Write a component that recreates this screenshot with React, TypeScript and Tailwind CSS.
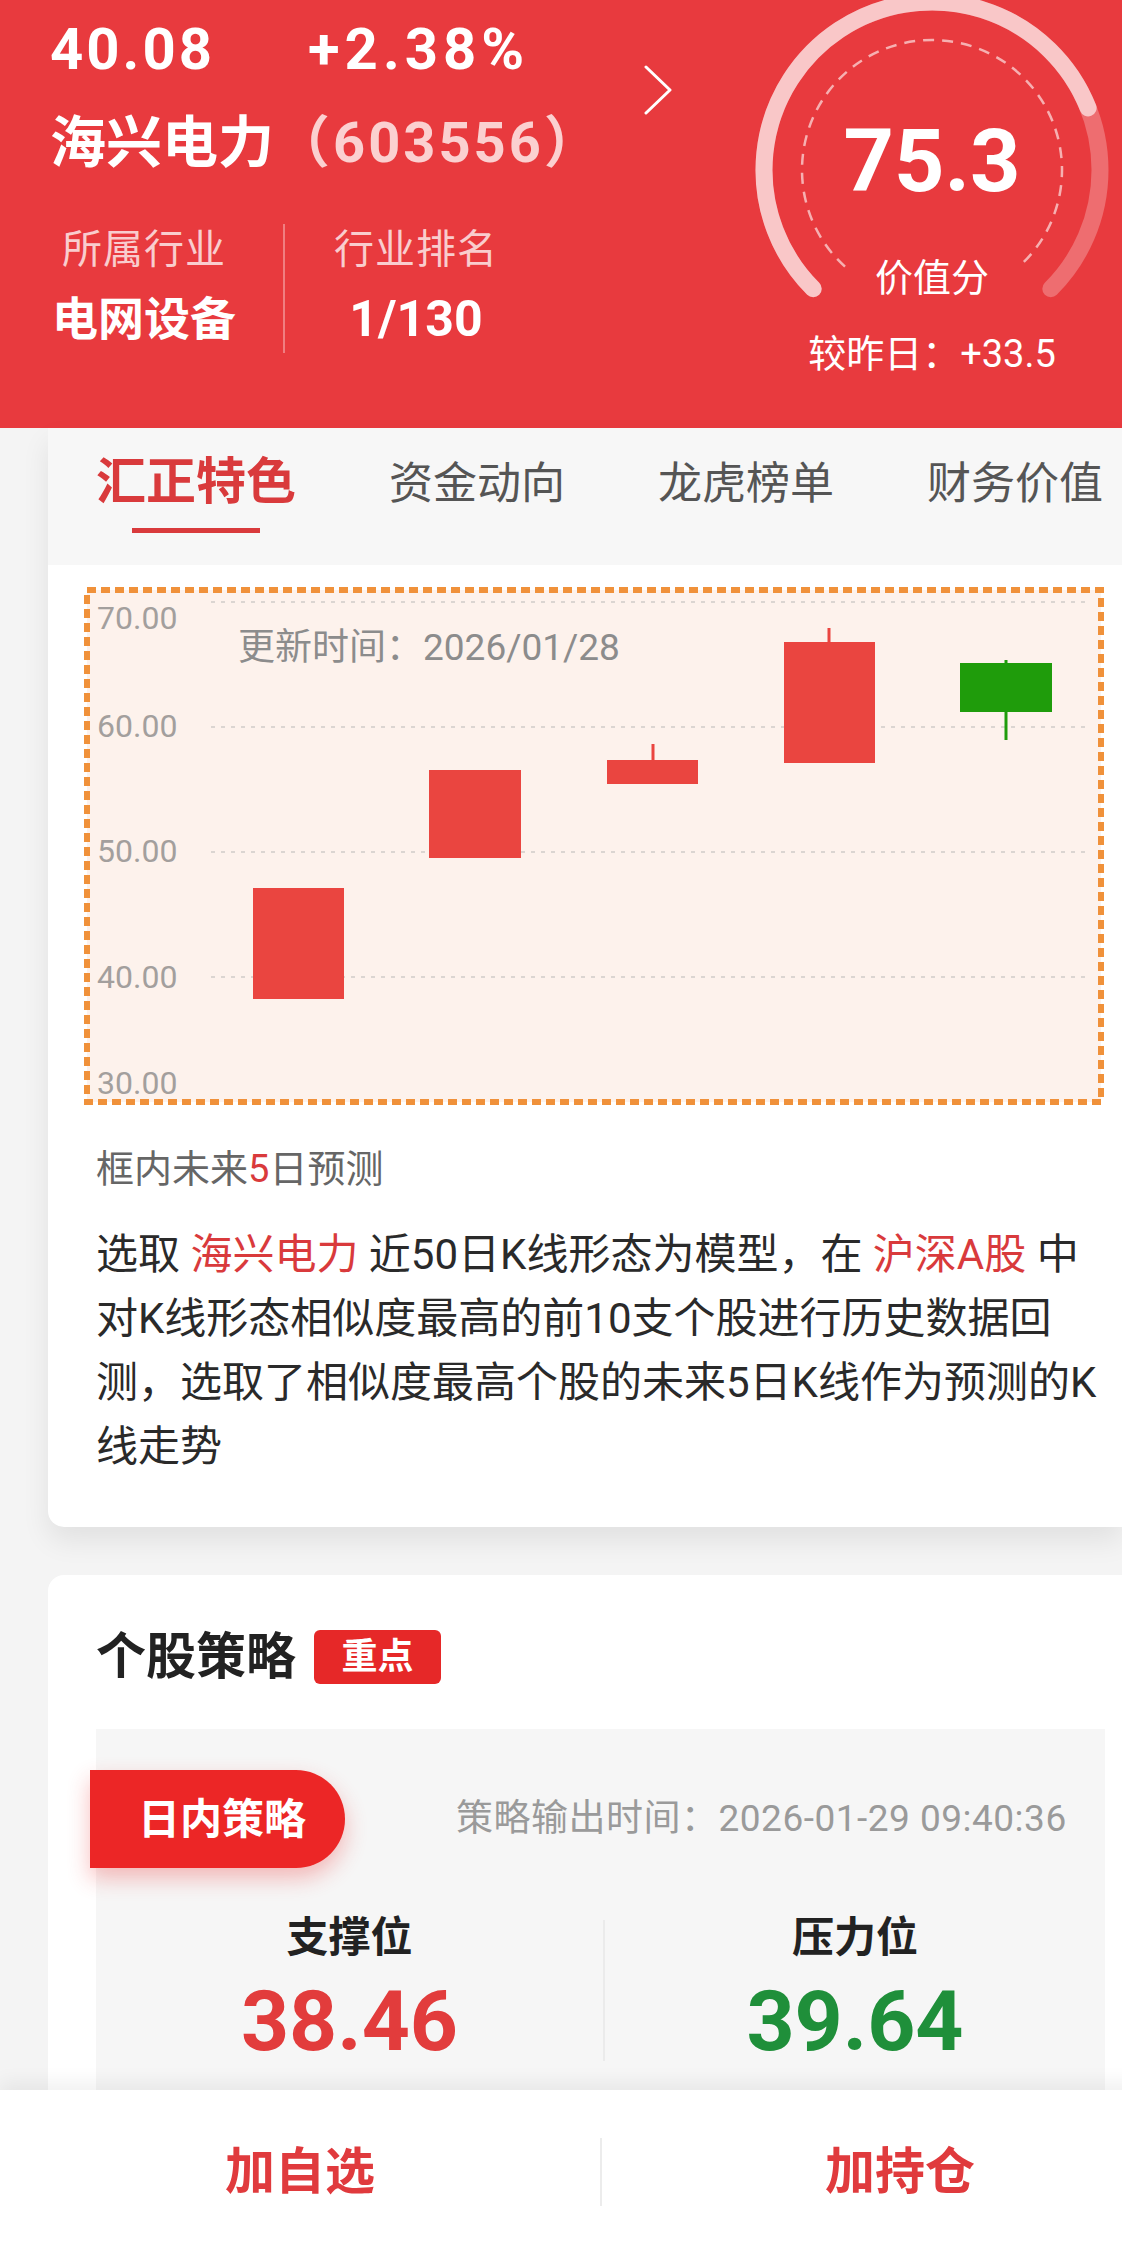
import React from "react";

const Gauge = () => {
  const cx = 190;
  const cy = 170;
  const r = 168;
  const pt = (deg: number, rad: number) => {
    const a = (deg * Math.PI) / 180;
    return [cx + rad * Math.sin(a), cy - rad * Math.cos(a)];
  };
  const [sx, sy] = pt(-135, r);
  const [ex, ey] = pt(135, r);
  const [vx, vy] = pt(-135 + 0.753 * 270, r);
  const r2 = 130;
  const [dsx, dsy] = pt(-138, r2);
  const [dex, dey] = pt(138, r2);
  return (
    <svg className="absolute left-0 top-0" width="380" height="428" viewBox="0 0 380 428">
      <path
        d={`M ${sx} ${sy} A ${r} ${r} 0 1 1 ${ex} ${ey}`}
        fill="none"
        stroke="rgba(255,255,255,0.26)"
        strokeWidth="17"
        strokeLinecap="round"
      />
      <path
        d={`M ${sx} ${sy} A ${r} ${r} 0 1 1 ${vx} ${vy}`}
        fill="none"
        stroke="rgba(255,255,255,0.62)"
        strokeWidth="17"
        strokeLinecap="round"
      />
      <path
        d={`M ${dsx} ${dsy} A ${r2} ${r2} 0 1 1 ${dex} ${dey}`}
        fill="none"
        stroke="rgba(255,255,255,0.6)"
        strokeWidth="2.5"
        strokeDasharray="11 8"
      />
    </svg>
  );
};

const Chart = () => {
  const font = "Roboto, 'Noto Sans CJK SC', sans-serif";
  const grid = [15, 140, 265, 390];
  const labels: [string, number][] = [
    ["70.00", 31],
    ["60.00", 139],
    ["50.00", 264],
    ["40.00", 390],
    ["30.00", 496],
  ];
  const red = "#ea4540";
  return (
    <svg width="1020" height="518" viewBox="0 0 1020 518" className="block">
      <rect x="3" y="3" width="1014" height="512" fill="#fdf2ec" stroke="#f0913a" strokeWidth="6" strokeDasharray="9 5" />
      {grid.map((y) => (
        <line key={y} x1="127" x2="1004" y1={y} y2={y} stroke="#dbd5d1" strokeWidth="2" strokeDasharray="4 6" />
      ))}
      {labels.map(([t, y]) => (
        <text key={t} x="13" y={y} fontSize="32" fill="#a39f9d" fontFamily={font} dominantBaseline="central">
          {t}
        </text>
      ))}
      <text x="154" y="60" fontSize="37" fill="#8c8c8c" fontFamily={font} dominantBaseline="central">
        更新时间：2026/01/28
      </text>
      <rect x="169" y="301" width="91" height="111" fill={red} />
      <rect x="345" y="183" width="92" height="88" fill={red} />
      <line x1="569" x2="569" y1="157" y2="175" stroke={red} strokeWidth="3" />
      <rect x="523" y="173" width="91" height="24" fill={red} />
      <line x1="745" x2="745" y1="41" y2="57" stroke={red} strokeWidth="3" />
      <rect x="700" y="55" width="91" height="121" fill={red} />
      <line x1="922" x2="922" y1="73" y2="153" stroke="#1f9c0b" strokeWidth="3" />
      <rect x="876" y="76" width="92" height="49" fill="#1f9c0b" />
    </svg>
  );
};

export default function App() {
  return (
    <div className="relative h-[2249px] w-[1122px] overflow-hidden bg-[#f4f4f4] font-[Roboto,'Noto_Sans_CJK_SC',sans-serif]">
      {/* Header */}
      <div className="flex h-[428px] bg-[#e83a3e] pl-[50px] text-white">
        <div className="flex w-[593px] flex-col">
          <div className="mt-[17px] flex h-[64px] items-center whitespace-nowrap text-[58px] font-bold leading-[64px] tracking-[3px]">
            <span className="w-[258px]">40.08</span>
            <span className="tracking-[5px]">+2.38%</span>
          </div>
          <div className="mt-[30px] h-[64px] whitespace-nowrap text-[56px] font-bold leading-[64px]">
            海兴电力<span className="tracking-[3px] text-[#fbd0d0]">（603556）</span>
          </div>
          <div className="mt-[49px] flex">
            <div className="w-[188px] text-center">
              <div className="mt-[2px] text-[40px] leading-[48px] tracking-[1px] text-white/75">所属行业</div>
              <div className="mt-[17px] text-[46px] font-bold leading-[56px]">电网设备</div>
            </div>
            <div className="ml-[45px] h-[129px] w-[2px] bg-white/35" />
            <div className="w-[262px] text-center">
              <div className="mt-[2px] text-[40px] leading-[48px] tracking-[1px] text-white/75">行业排名</div>
              <div className="mt-[17px] text-[50px] font-bold leading-[56px]">1/130</div>
            </div>
          </div>
        </div>
        <svg className="mt-[65px] h-[50px] w-[30px]" viewBox="0 0 30 50">
          <polyline points="3,2 27,25 3,48" fill="none" stroke="white" strokeWidth="3" strokeLinecap="round" strokeLinejoin="round" />
        </svg>
        <div className="relative ml-[69px] flex h-[428px] w-[380px] flex-col items-center">
          <Gauge />
          <div className="relative mt-[117px] text-[88px] font-bold leading-[88px]">75.3</div>
          <div className="relative mt-[51px] text-[38px] leading-[44px]">价值分</div>
          <div className="relative mt-[32px] whitespace-nowrap text-[38px] leading-[44px]">较昨日：+33.5</div>
        </div>
      </div>

      {/* Card 1 */}
      <div className="ml-[48px] rounded-bl-[16px] bg-white shadow-[0_14px_28px_rgba(0,0,0,0.08)]">
        <div className="flex h-[137px] items-baseline gap-[93px] overflow-hidden whitespace-nowrap bg-[#f7f7f7] pl-[48px] pt-[26px]">
          <div className="flex flex-col items-center">
            <span className="text-[50px] font-bold leading-[56px] text-[#d93a3c]">汇正特色</span>
            <span className="mt-[18px] h-[5px] w-[128px] bg-[#d93a3c]" />
          </div>
          <span className="text-[44px] leading-[56px] text-[#555]">资金动向</span>
          <span className="text-[44px] leading-[56px] text-[#555]">龙虎榜单</span>
          <span className="text-[44px] leading-[56px] text-[#555]">财务价值</span>
        </div>
        <div className="pb-[48px] pt-[22px]">
          <div className="ml-[36px] w-[1020px]">
            <Chart />
          </div>
          <div className="mt-[40px] pl-[48px] text-[38px] leading-[48px] text-[#666]">
            框内未来<span className="text-[#d93a3c]">5</span>日预测
          </div>
          <div className="mt-[30px] whitespace-nowrap pl-[48px] text-[42px] leading-[64px] text-[#2a2a2a]">
            <div>
              选取 <span className="text-[#d93a3c]">海兴电力</span> 近50日K线形态为模型，在 <span className="text-[#d93a3c]">沪深A股</span> 中
            </div>
            <div>对K线形态相似度最高的前10支个股进行历史数据回</div>
            <div>测，选取了相似度最高个股的未来5日K线作为预测的K</div>
            <div>线走势</div>
          </div>
        </div>
      </div>

      {/* Card 2 */}
      <div className="ml-[48px] mt-[48px] rounded-tl-[16px] bg-white pl-[48px] pt-[52px]">
        <div className="flex items-center">
          <span className="text-[50px] font-bold leading-[60px] text-[#222]">个股策略</span>
          <span className="ml-[18px] flex h-[54px] w-[127px] items-center justify-center rounded-[6px] bg-[#e62828] text-[36px] font-bold leading-none text-white">
            重点
          </span>
        </div>
        <div className="mt-[42px] w-[1009px] bg-[#f6f6f6] pb-[200px] pt-[41px]">
          <div className="flex items-center">
            <div className="-ml-[6px] flex h-[98px] w-[255px] items-center justify-center rounded-r-full bg-[#ec2626] pl-[9px] text-[42px] font-bold text-white shadow-[0_10px_22px_rgba(236,38,38,0.3)]">
              日内策略
            </div>
            <span className="ml-[111px] whitespace-nowrap text-[37px] tracking-[0.5px] text-[#9a9a9a]">
              策略输出时间：2026-01-29 09:40:36
            </span>
          </div>
          <div className="mt-[46px] flex">
            <div className="flex w-[507px] flex-col items-center">
              <span className="text-[42px] font-bold leading-[48px] text-[#222]">支撑位</span>
              <span className="mt-[18px] text-[84px] font-bold leading-[84px] text-[#e23c3c]">38.46</span>
            </div>
            <div className="mt-[6px] h-[141px] w-[2px] bg-[#ebebeb]" />
            <div className="flex flex-1 flex-col items-center">
              <span className="text-[42px] font-bold leading-[48px] text-[#222]">压力位</span>
              <span className="mt-[18px] text-[84px] font-bold leading-[84px] text-[#1f8f3a]">39.64</span>
            </div>
          </div>
        </div>
      </div>

      {/* Bottom bar */}
      <div className="absolute bottom-0 left-0 flex h-[159px] w-[1198px] items-center bg-white pt-[5px] shadow-[0_-8px_18px_rgba(0,0,0,0.06)]">
        <div className="w-[600px] text-center text-[50px] font-bold text-[#e03a3d]">加自选</div>
        <div className="h-[68px] w-[2px] bg-[#ececec]" />
        <div className="w-[596px] text-center text-[50px] font-bold text-[#e03a3d]">加持仓</div>
      </div>
    </div>
  );
}
